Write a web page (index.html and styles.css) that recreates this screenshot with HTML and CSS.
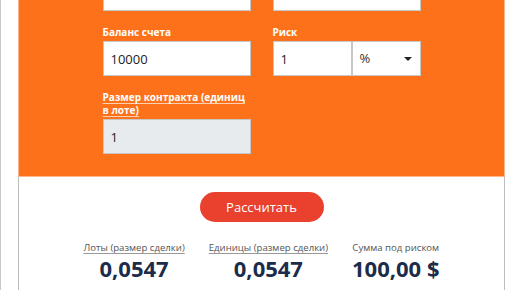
FILE: index.html
```html
<!DOCTYPE html>
<html lang="ru">
<head>
	<meta charset="UTF-8">
	<title>Калькулятор размера позиции</title>
	<link rel="stylesheet" href="styles.css">
</head>
<body>
<div class="page">
	<div class="calc">
		<div class="calc-form">
			<div class="row">
				<div class="field">
					<input type="text" class="inp">
				</div>
				<div class="field">
					<input type="text" class="inp">
				</div>
			</div>
			<div class="row">
				<div class="field">
					<label class="lbl">Баланс счета</label>
					<input type="text" class="inp" value="10000">
				</div>
				<div class="field">
					<label class="lbl">Риск</label>
					<div class="pair">
						<input type="text" class="inp inp-short" value="1">
						<div class="sel">%<i class="caret"></i></div>
					</div>
				</div>
			</div>
			<div class="row">
				<div class="field">
					<label class="lbl lbl-u">Размер контракта (единиц в лоте)</label>
					<input type="text" class="inp inp-off" value="1" disabled>
				</div>
			</div>
		</div>
		<div class="calc-res">
			<button class="btn">Рассчитать</button>
			<div class="res">
				<div class="res-item">
					<p class="res-lbl res-u">Лоты (размер сделки)</p>
					<p class="res-val">0,0547</p>
				</div>
				<div class="res-item">
					<p class="res-lbl res-u">Единицы (размер сделки)</p>
					<p class="res-val">0,0547</p>
				</div>
				<div class="res-item">
					<p class="res-lbl">Сумма под риском</p>
					<p class="res-val">100,00 $</p>
				</div>
			</div>
		</div>
	</div>
</div>
</body>
</html>
```

FILE: styles.css
```css
*{margin:0;padding:0;box-sizing:border-box;}
html,body{height:100%;}
body{
	font-family:"Open Sans","DejaVu Sans",sans-serif;
	background:#fff;
	overflow:hidden;
	border-left:1px solid #c9c9c9;
}
.page{
	display:flow-root;
	height:100%;
	padding-left:17px;
}
.calc{
	width:487px;
	margin-top:-34px;
	border-left:1px solid #bdbdbd;
	border-right:1px solid #bdbdbd;
	min-height:400px;
}
/* orange part */
.calc-form{
	background:#fd711a;
	margin:0 -1px;
	border:1px solid #fdb58c;
	border-top:0;
	padding:10px 0 22px;
}
.row{
	display:grid;
	grid-template-columns:148px 148px;
	column-gap:22px;
	justify-content:center;
	margin-bottom:15px;
}
.row:last-child{margin-bottom:0;}
.field{display:flex;flex-direction:column;}
.lbl{
	color:#fff;
	font-size:10px;
	font-weight:700;
	line-height:13px;
	margin-bottom:2px;
}
.lbl-u{
	text-decoration:underline;
	text-decoration-color:#fcd0b2;
	text-underline-offset:2px;
}
.inp{
	width:148px;
	height:35px;
	border:1px solid #c7c7c7;
	background:#fff;
	font-family:"Open Sans","DejaVu Sans",sans-serif;
	font-size:13px;
	color:#222;
	padding:0 7px;
	outline:none;
}
.inp-off{background:#e8ebee;color:#222;}
.pair{display:flex;}
.inp-short{width:79px;}
.sel{
	width:69px;
	height:35px;
	border:1px solid #c7c7c7;
	background:#fff;
	font-size:13px;
	color:#333;
	line-height:33px;
	padding-left:7px;
	position:relative;
}
.caret{
	position:absolute;
	right:8px;
	top:15px;
	border-left:4px solid transparent;
	border-right:4px solid transparent;
	border-top:4px solid #222;
}
/* white part */
.calc-res{
	padding-top:15px;
	text-align:center;
}
.btn{
	width:124px;
	height:30px;
	border:0;
	border-radius:15px;
	background:#e9412e;
	color:#fff;
	font-family:"Open Sans","DejaVu Sans",sans-serif;
	font-size:13px;
}
.res{
	display:flex;
	justify-content:center;
	gap:24px;
	margin-top:19px;
}
.res-lbl{
	font-size:9.6px;
	color:#555;
	line-height:14px;
}
.res-u{
	text-decoration:underline;
	text-decoration-color:#999;
	text-underline-offset:2px;
}
.res-val{
	font-size:22px;
	font-weight:700;
	color:#1c2c4a;
	line-height:26px;
}
```
